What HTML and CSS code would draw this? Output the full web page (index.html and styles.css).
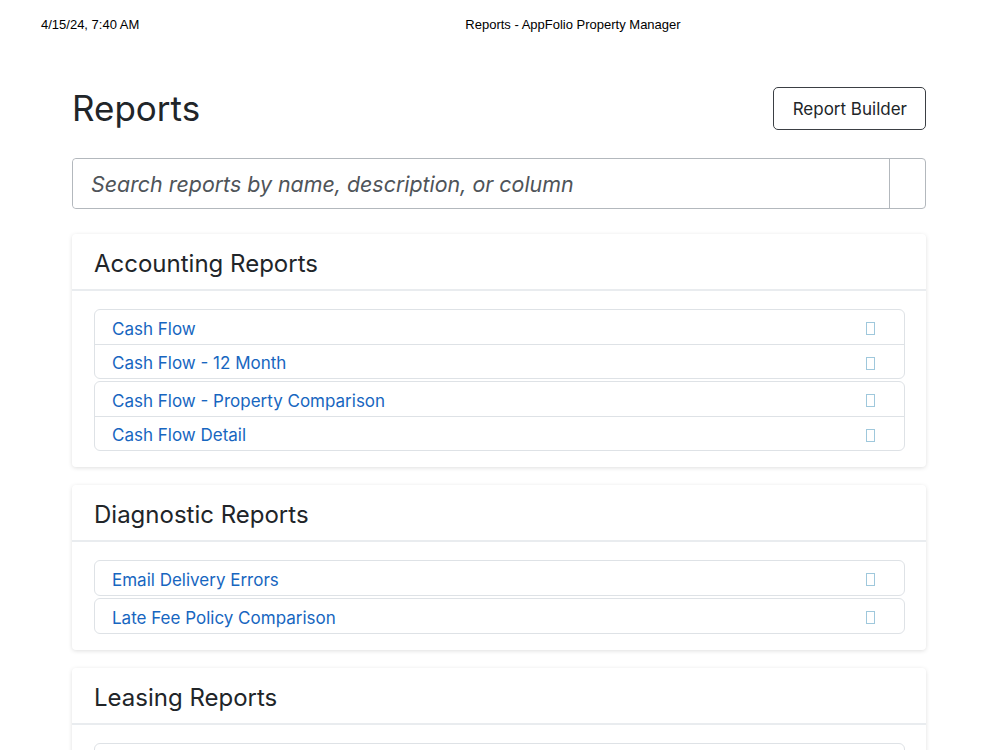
FILE: index.html
```html
<!DOCTYPE html>
<html>
<head>
    <title>Reports - AppFolio Property Manager</title>
    <link rel="stylesheet" href="styles.css">
</head>
<body>
    <div class="print-header">
        <span class="print-date">4/15/24, 7:40 AM</span>
        <span class="print-title">Reports - AppFolio Property Manager</span>
    </div>

    <div class="page">
        <div class="page-top">
            <h1>Reports</h1>
            <button class="btn-outline">Report Builder</button>
        </div>

        <div class="search-group">
            <input type="text" class="search-input" placeholder="Search reports by name, description, or column">
            <span class="search-addon"></span>
        </div>

        <div class="card">
            <div class="card-header">Accounting Reports</div>
            <div class="card-body">
                <ul class="list-group">
                    <li class="list-item"><a href="#">Cash Flow</a><span class="fav-icon"></span></li>
                    <li class="list-item"><a href="#">Cash Flow - 12 Month</a><span class="fav-icon"></span></li>
                </ul>
                <ul class="list-group">
                    <li class="list-item"><a href="#">Cash Flow - Property Comparison</a><span class="fav-icon"></span></li>
                    <li class="list-item"><a href="#">Cash Flow Detail</a><span class="fav-icon"></span></li>
                </ul>
            </div>
        </div>

        <div class="card">
            <div class="card-header">Diagnostic Reports</div>
            <div class="card-body">
                <ul class="list-group">
                    <li class="list-item"><a href="#">Email Delivery Errors</a><span class="fav-icon"></span></li>
                </ul>
                <ul class="list-group">
                    <li class="list-item"><a href="#">Late Fee Policy Comparison</a><span class="fav-icon"></span></li>
                </ul>
            </div>
        </div>

        <div class="card">
            <div class="card-header">Leasing Reports</div>
            <div class="card-body">
                <ul class="list-group">
                    <li class="list-item"><span class="fav-icon"></span></li>
                </ul>
            </div>
        </div>
    </div>
</body>
</html>
```

FILE: styles.css
```css
body {
    margin: 0;
    font-family: Inter, "Noto Sans", sans-serif;
    color: #212529;
    background: #fff;
}

.print-header {
    display: flex;
    height: 50px;
    padding: 17px 0 0 41px;
    box-sizing: border-box;
    font-family: "Liberation Sans", Arial, sans-serif;
    font-size: 13px;
    color: #000;
}

.print-title {
    margin-left: 326px;
}

.page {
    width: 854px;
    margin: 0 0 0 72px;
    padding-top: 37px;
}

.page-top {
    display: flex;
    justify-content: space-between;
    align-items: center;
    height: 43px;
}

h1 {
    margin: 0;
    font-size: 35px;
    font-weight: 400;
    color: #212529;
    line-height: 1;
}

.btn-outline {
    height: 43px;
    padding: 0 18px 0 19px;
    background: #fff;
    border: 1px solid #3b3f44;
    border-radius: 5px;
    font-family: inherit;
    font-size: 17px;
    color: #212529;
}

.search-group {
    display: flex;
    margin-top: 28px;
    height: 51px;
    border: 1px solid #b3b8bd;
    border-radius: 4px;
    box-sizing: border-box;
}

.search-input {
    flex: 1;
    border: none;
    border-radius: 4px 0 0 4px;
    padding: 0 18px;
    font-family: inherit;
    font-size: 21.4px;
    font-style: italic;
    outline: none;
}

.search-input::placeholder {
    color: #4f5459;
}

.search-addon {
    width: 35px;
    border-left: 1px solid #b3b8bd;
}

.card {
    margin-top: 25px;
    background: #fff;
    border-radius: 4px;
    box-shadow: 0 1px 4px rgba(0, 0, 0, 0.13);
}

.card + .card {
    margin-top: 18px;
}

.card-header {
    height: 57px;
    padding: 3px 22px 0;
    box-sizing: border-box;
    display: flex;
    align-items: center;
    font-size: 24px;
    border-bottom: 2px solid #e9ecef;
}

.card-body {
    padding: 18px 21px 16px 22px;
}

.list-group {
    list-style: none;
    margin: 0 0 2px 0;
    padding: 0;
    border: 1px solid #dee2e6;
    border-radius: 6px;
}

.list-group:last-child {
    margin-bottom: 0;
}

.list-item {
    display: flex;
    align-items: center;
    justify-content: space-between;
    height: 34px;
    padding: 3px 29px 0 17px;
    box-sizing: border-box;
}

.list-item + .list-item {
    border-top: 1px solid #dee2e6;
}

.list-item a {
    font-size: 17px;
    color: #1766c0;
    text-decoration: none;
}

.fav-icon {
    width: 7px;
    height: 11px;
    margin-left: auto;
    border: 1px solid #9fc8dc;
}
```
